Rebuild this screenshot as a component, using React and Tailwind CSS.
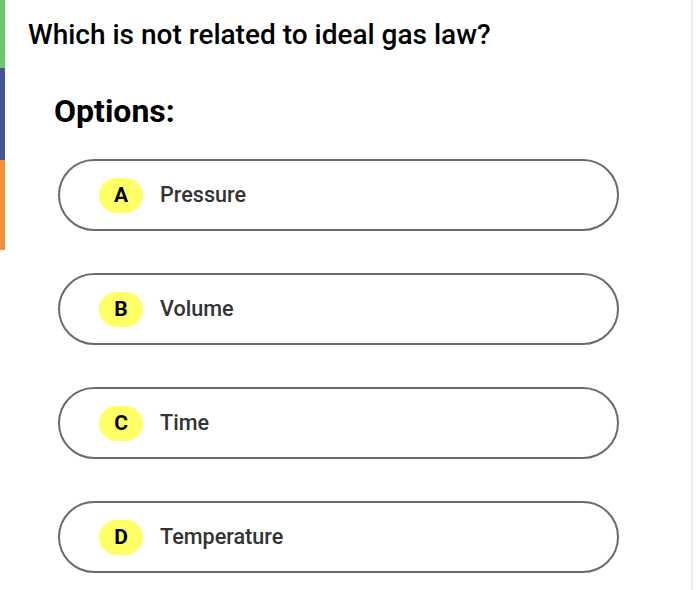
import React from 'react';

const options = [
  { key: 'A', label: 'Pressure' },
  { key: 'B', label: 'Volume' },
  { key: 'C', label: 'Time' },
  { key: 'D', label: 'Temperature' },
];

const OptionRow = ({ letter, label }) => (
  <div className="flex h-[72px] w-[561px] items-center gap-[17px] rounded-full border-2 border-[#6b6b6b] bg-white pl-[39px]">
    <span className="flex h-[35px] w-[44px] items-center justify-center rounded-full bg-[#ffff66] pt-px text-[21px] font-bold text-black">
      {letter}
    </span>
    <span className="text-[21.6px] font-medium text-[#333333]">{label}</span>
  </div>
);

export default function App() {
  return (
    <div className="flex min-h-[590px] w-[693px] border-r-2 border-[#ebebeb] bg-white font-['Roboto',sans-serif]">
      <div className="flex w-[5px] shrink-0 flex-col">
        <div className="h-[68px] bg-[#6cc870]" />
        <div className="h-[92px] bg-[#41558f]" />
        <div className="h-[90px] bg-[#f0903c]" />
      </div>
      <div className="flex-1 pl-[23px] pt-[19px]">
        <h1 className="text-[28px] font-medium leading-8 text-black">Which is not related to ideal gas law?</h1>
        <h2 className="mt-[42px] pl-[26px] text-[32px] font-bold leading-9 text-black">Options:</h2>
        <div className="mt-[30px] flex flex-col gap-[42px] pl-[30px]">
          {options.map(o => <OptionRow key={o.key} letter={o.key} label={o.label} />)}
        </div>
      </div>
    </div>
  );
}
